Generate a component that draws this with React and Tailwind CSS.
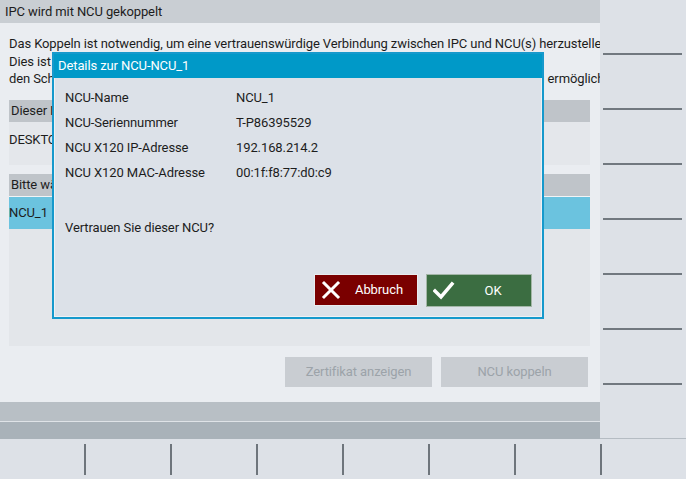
import React from "react";

function SoftkeyPanel() {
  const items = [0, 1, 2, 3, 4, 5, 6, 7];
  return (
    <div className="w-[86px] h-full flex flex-col bg-[#dde1e7] border-b border-[#b5bcc3]">
      {items.map((i) => (
        <React.Fragment key={i}>
          <div className="flex-1" />
          {i < 7 && <div className="h-[2px] ml-[3px] mr-[4px] bg-[#71787f]" />}
        </React.Fragment>
      ))}
    </div>
  );
}

function BottomBar() {
  const items = [0, 1, 2, 3, 4, 5, 6, 7];
  return (
    <div className="h-[40px] flex items-center bg-[#dde1e7]">
      {items.map((i) => (
        <React.Fragment key={i}>
          <div className="flex-1 h-full" />
          {i < 7 && <div className="w-[2px] h-[31px] bg-[#6e757c]" />}
        </React.Fragment>
      ))}
    </div>
  );
}

function Dialog() {
  const rows = [
    ["NCU-Name", "NCU_1"],
    ["NCU-Seriennummer", "T-P86395529"],
    ["NCU X120 IP-Adresse", "192.168.214.2"],
    ["NCU X120 MAC-Adresse", "00:1f:f8:77:d0:c9"],
  ];
  return (
    <div className="absolute left-[52px] top-[52px] w-[492px] h-[267px] border-2 border-[#1699cc] bg-[#dce1e8] flex flex-col">
      <div className="h-[24px] bg-[#0099c8] text-white pl-[4px] flex items-center">
        Details zur NCU-NCU_1
      </div>
      <div className="flex-1 flex flex-col pl-[10px] pt-[7px] border border-[#eef1f4] border-t-0">
        {rows.map(([l, v]) => (
          <div key={l} className="h-[25px] flex items-center">
            <div className="w-[171px]">{l}</div>
            <div>{v}</div>
          </div>
        ))}
        <div className="h-[25px] flex items-center mt-[30px]">Vertrauen Sie dieser NCU?</div>
        <div className="flex-1" />
        <div className="flex justify-end gap-[8px] pr-[9px] pb-[9px]">
          <div className="w-[104px] h-[32px] bg-[#7a0000] border border-[#e9ecef] text-white flex items-center">
            <svg width="20" height="20" viewBox="0 0 20 20" className="ml-[6px]">
              <path d="M3 3 L17 17 M17 3 L3 17" stroke="white" strokeWidth="3" strokeLinecap="square" fill="none" />
            </svg>
            <div className="flex-1 text-center">Abbruch</div>
          </div>
          <div className="w-[106px] h-[33px] bg-[#3b6d41] border border-[#a3b6a7] text-white flex items-center">
            <svg width="22" height="20" viewBox="0 0 22 20" className="ml-[6px]">
              <path d="M2 10 L8 16 L19 3" stroke="white" strokeWidth="3.5" strokeLinecap="square" strokeLinejoin="miter" fill="none" />
            </svg>
            <div className="flex-1 text-center">OK</div>
          </div>
        </div>
      </div>
    </div>
  );
}

export default function App() {
  return (
    <div className="w-[686px] h-[479px] relative overflow-hidden flex flex-col font-['Roboto',sans-serif] text-[13px] tracking-[-0.1px] text-[#1d1d1d]">
      <div className="flex h-[439px]">
        <div className="w-[600px] flex flex-col overflow-hidden bg-[#eaedf1]">
          <div className="h-[23px] shrink-0 bg-[#c9ced3] pl-[5px] flex items-center whitespace-nowrap">
            IPC wird mit NCU gekoppelt
          </div>
          <div className="flex-1 flex flex-col pl-[9px] pt-[12px]">
            <div className="leading-[17.5px] whitespace-nowrap">
              <div>Das Koppeln ist notwendig, um eine vertrauenswürdige Verbindung zwischen IPC und NCU(s) herzustellen.</div>
              <div>Dies ist nur einmal für jede neue NCU erforderlich.</div>
              <div>den Schutz der Kommunikation zwischen IPC und der NCU(s) dauerhaft sicherzustellen und zu ermöglichen.</div>
            </div>
            <div className="w-[581px] mt-[12.5px] flex flex-col">
              <div className="h-[22px] bg-[#bfc4c9] pl-[2px] flex items-center">Dieser IPC</div>
              <div className="h-[43px] bg-[#e4e7eb] pt-[8px]">DESKTOP-4K7R2PL</div>
            </div>
            <div className="w-[581px] mt-[9px] h-[172px] flex flex-col bg-[#e3e6ea]">
              <div className="h-[22px] bg-[#bfc4c9] pl-[2px] flex items-center">Bitte wählen Sie eine NCU aus</div>
              <div className="h-[1px] bg-[#f2f4f6]" />
              <div className="h-[32px] bg-[#6bc3df] flex items-center">NCU_1</div>
            </div>
            <div className="mt-[11px] flex justify-end gap-[9px] pr-[12px]">
              <div className="w-[147px] h-[30px] bg-[#c9cdd2] text-[#9ca3a9] flex items-center justify-center">
                Zertifikat anzeigen
              </div>
              <div className="w-[147px] h-[30px] bg-[#c9cdd2] text-[#9ca3a9] flex items-center justify-center">
                NCU koppeln
              </div>
            </div>
          </div>
          <div className="h-[19px] shrink-0 bg-[#b8bfc5]" />
          <div className="h-[1px] shrink-0 bg-[#dfe3e7]" />
          <div className="h-[17px] shrink-0 bg-[#a9b2b9]" />
        </div>
        <SoftkeyPanel />
      </div>
      <BottomBar />
      <Dialog />
    </div>
  );
}
